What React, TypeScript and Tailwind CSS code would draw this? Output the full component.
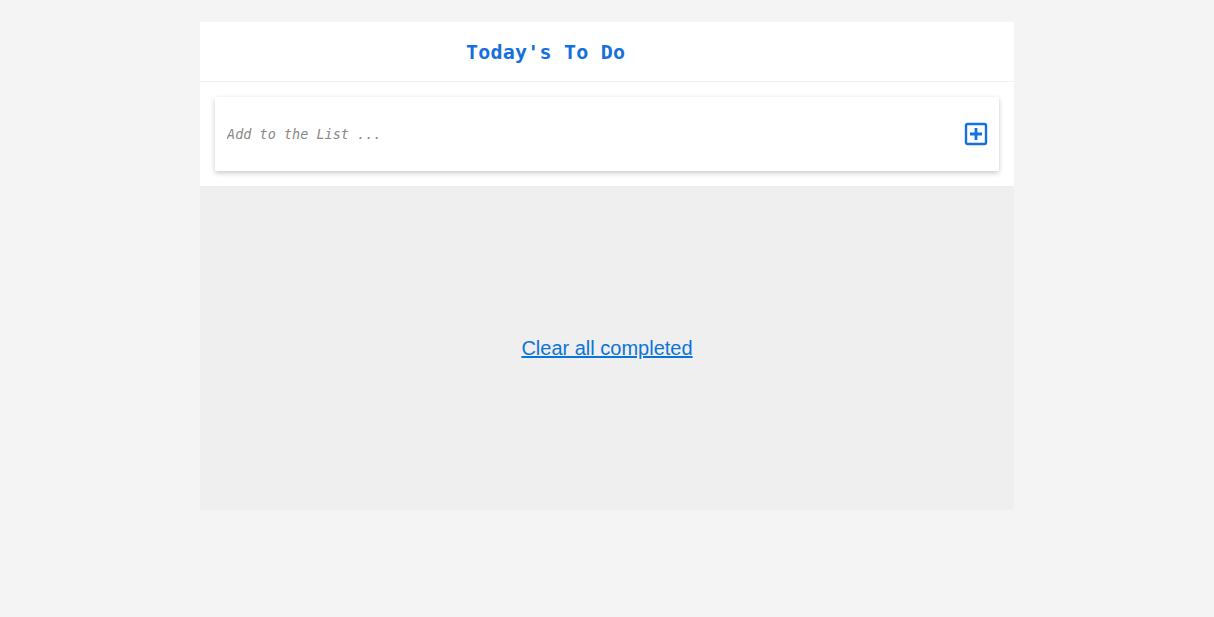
import { useState } from 'react';

export default function App() {
    const [text, setText] = useState('');

    return (
        <div className="min-h-screen bg-[#f4f4f4] pt-[22px]">
            <div className="mx-auto w-[814px]">
                <header className="flex h-[60px] items-center border-b border-[#f0f0f0] bg-white pl-[266px]">
                    <h1 className="font-['DejaVu_Sans_Mono',monospace] text-[20px] font-bold tracking-[0.2px] text-[#1570dd]">Today's To Do</h1>
                </header>
                <div className="bg-white px-[15px] pb-[15px] pt-[15px]">
                    <div className="flex h-[74px] items-center bg-white pl-3 pr-[11px] shadow-[0_2px_5px_rgba(0,0,0,0.22)]">
                        <input
                            value={text}
                            onChange={(e) => setText(e.target.value)}
                            placeholder="Add to the List ..."
                            className="flex-1 bg-transparent font-['DejaVu_Sans_Mono',monospace] text-[13.5px] italic text-gray-700 outline-none placeholder:text-[#888]"
                        />
                        <button className="text-[#1570dd]">
                            <svg width="24" height="24" viewBox="0 0 24 24" fill="none" stroke="currentColor" strokeWidth="2.4">
                                <rect x="2" y="2" width="20" height="20" rx="1.5" />
                                <path d="M12 6v12M6 12h12" strokeWidth="2.8" />
                            </svg>
                        </button>
                    </div>
                </div>
                <div className="flex h-[324px] items-center justify-center bg-[#efefef]">
                    <a href="#" className="font-['Liberation_Sans',Arial,sans-serif] text-[20px] text-[#0b74d8] underline">
                        Clear all completed
                    </a>
                </div>
            </div>
        </div>
    );
}
